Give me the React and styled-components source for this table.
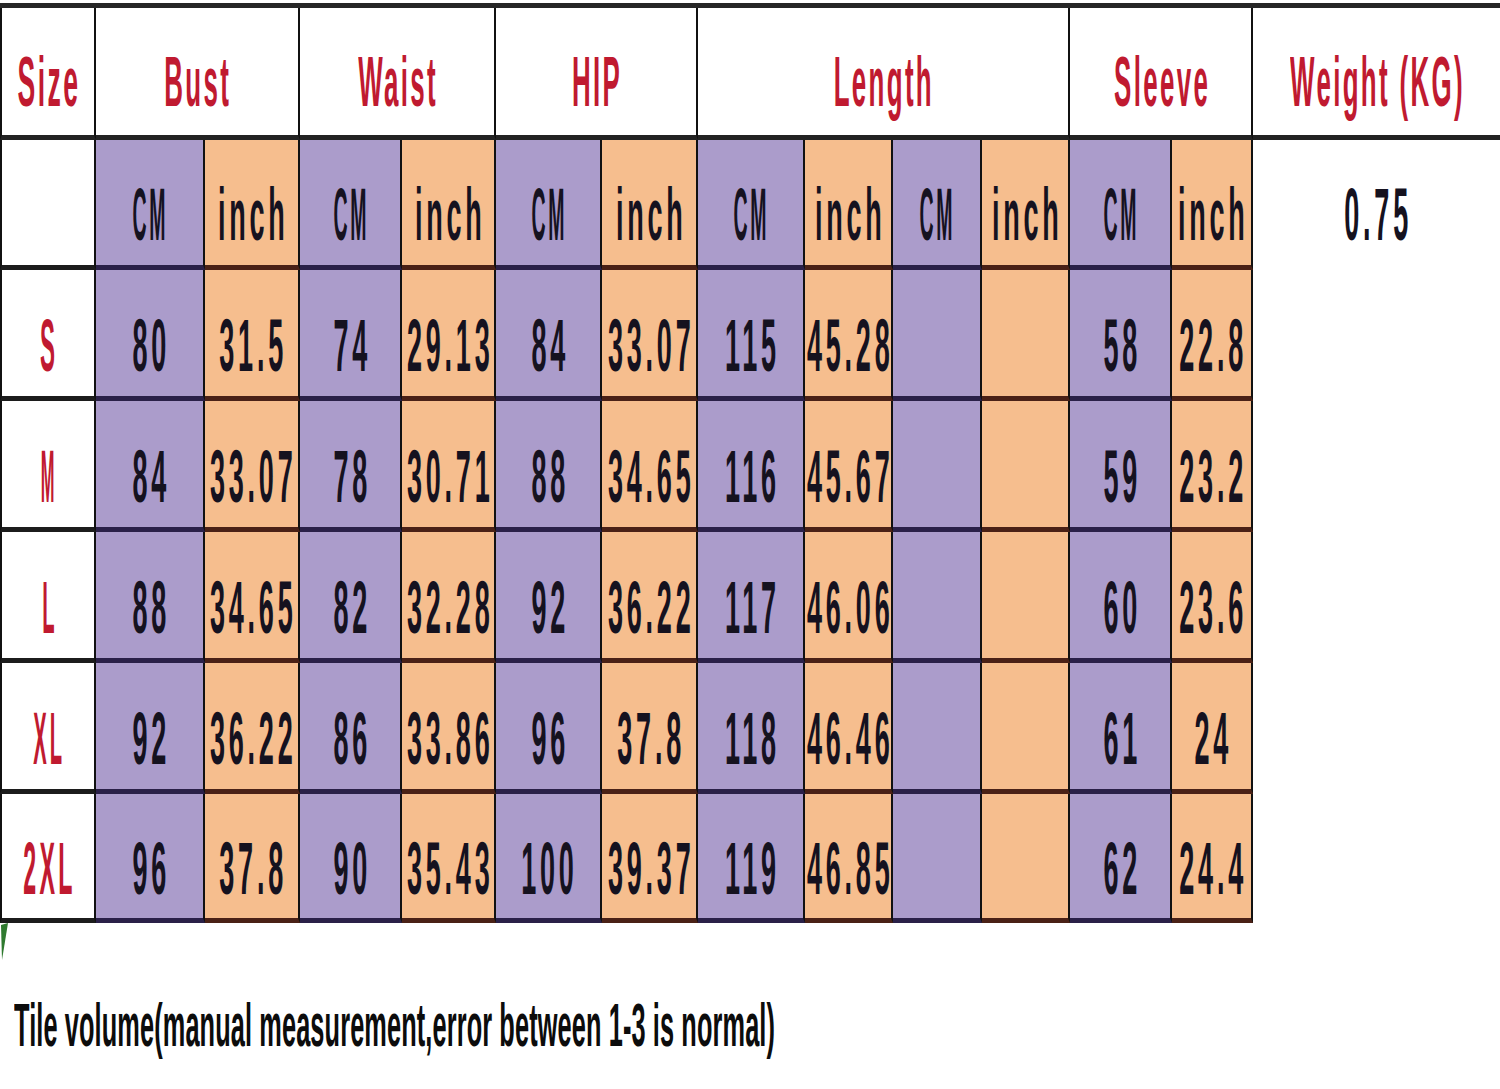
import React from "react";
import styled, { createGlobalStyle } from "styled-components";

const Global = createGlobalStyle`
  html, body { margin: 0; padding: 0; background: #ffffff; overflow: hidden; }
  body { font-family: "Liberation Sans", Arial, sans-serif; }
`;

const Page = styled.div`
  position: relative;
  width: 1500px;
  height: 1089px;
  overflow: hidden;
  background: #fff;
`;

const Grid = styled.div`
  display: grid;
  margin: 3px 0 0 0;
  grid-template-columns: 96px 109px 95px 102px 94px 106px 96px 107px 88px 89px 88px 102px 81px 247px;
  grid-template-rows: 132px 130px 131px 131px 131px 131px 129px;
  border-top: 5px solid #262626;
`;

const LINE = {
  head: "#222222",
  size: "#1c1c1c",
  cm: "#2a2048",
  inch: "#4a2116",
};

const FILL = {
  head: "#ffffff",
  size: "#ffffff",
  cm: "#ab9ccb",
  inch: "#f6be8e",
};

const Cell = styled.div`
  box-sizing: border-box;
  display: flex;
  align-items: center;
  justify-content: center;
  padding-top: ${(p) => (p.$kind === "head" ? 21 : 24)}px;
  background: ${(p) => FILL[p.$kind]};
  border-bottom: 5px solid ${(p) => LINE[p.$kind]};
  border-right: 2px solid #111;
  border-left: ${(p) => (p.$first ? "2px solid #111" : "none")};
  grid-column: span ${(p) => p.$span || 1};
  min-width: 0;
`;

const WeightHead = styled(Cell)`
  border-right: none;
`;

const WeightBody = styled.div`
  grid-column: 14;
  grid-row: 2 / span 6;
  display: flex;
  justify-content: center;
  align-items: flex-start;
`;

const WeightValue = styled.div`
  height: 125px;
  box-sizing: border-box;
  padding-top: 24px;
  display: flex;
  align-items: center;
  justify-content: center;
`;

const Label = styled.span`
  display: inline-block;
  white-space: nowrap;
  font-family: "Liberation Sans", Arial, sans-serif;
  font-weight: 700;
  font-size: ${(p) => p.$size || 75}px;
  line-height: 1;
  color: ${(p) => (p.$red ? "#c01a30" : "#15121f")};
  transform: scaleX(${(p) => p.$sx || 0.36});
  transform-origin: center;
  letter-spacing: ${(p) => p.$ls ?? 0.14}em;
  padding-left: ${(p) => p.$ls ?? 0.14}em;
`;

const Footer = styled.div`
  margin-top: 72px;
  padding-left: 14px;
  white-space: nowrap;
`;

const FooterText = styled.span`
  display: inline-block;
  font-family: "Liberation Sans", Arial, sans-serif;
  font-weight: 700;
  font-size: 61px;
  line-height: 1;
  color: #0c0c0c;
  transform: scaleX(0.415);
  transform-origin: left center;
  letter-spacing: 0.005em;
`;

const Mark = styled.svg`
  position: absolute;
  left: 0;
  top: 922px;
`;

const headers = [
  { t: "Bust", span: 2 },
  { t: "Waist", span: 2 },
  { t: "HIP", span: 2 },
  { t: "Length", span: 4 },
  { t: "Sleeve", span: 2 },
];

const rows = [
  { s: "S", sx: 0.3, v: ["80", "31.5", "74", "29.13", "84", "33.07", "115", "45.28", "", "", "58", "22.8"] },
  { s: "M", sx: 0.22, v: ["84", "33.07", "78", "30.71", "88", "34.65", "116", "45.67", "", "", "59", "23.2"] },
  { s: "L", sx: 0.27, v: ["88", "34.65", "82", "32.28", "92", "36.22", "117", "46.06", "", "", "60", "23.6"] },
  { s: "XL", sx: 0.27, v: ["92", "36.22", "86", "33.86", "96", "37.8", "118", "46.46", "", "", "61", "24"] },
  { s: "2XL", sx: 0.31, v: ["96", "37.8", "90", "35.43", "100", "39.37", "119", "46.85", "", "", "62", "24.4"] },
];

export default function App() {
  return (
    <Page>
      <Global />
      <Grid>
        <Cell $kind="head" $first>
          <Label $red $size={70} $sx={0.38} $ls={0.09}>Size</Label>
        </Cell>
        {headers.map((h) => (
          <Cell key={h.t} $kind="head" $span={h.span}>
            <Label $red $size={70} $sx={0.37} $ls={0.09}>{h.t}</Label>
          </Cell>
        ))}
        <WeightHead $kind="head">
          <Label $red $size={70} $sx={0.37} $ls={0.09}>Weight (KG)</Label>
        </WeightHead>

        <Cell $kind="size" $first />
        {Array.from({ length: 12 }).map((_, i) => {
          const cm = i % 2 === 0;
          return (
            <Cell key={"u" + i} $kind={cm ? "cm" : "inch"}>
              <Label $sx={cm ? 0.26 : 0.36}>{cm ? "CM" : "inch"}</Label>
            </Cell>
          );
        })}
        <WeightBody>
          <WeightValue>
            <Label>0.75</Label>
          </WeightValue>
        </WeightBody>

        {rows.map((r) => (
          <React.Fragment key={r.s}>
            <Cell $kind="size" $first>
              <Label $red $sx={r.sx}>{r.s}</Label>
            </Cell>
            {r.v.map((t, i) => (
              <Cell key={r.s + i} $kind={i % 2 === 0 ? "cm" : "inch"}>
                {t && <Label>{t}</Label>}
              </Cell>
            ))}
          </React.Fragment>
        ))}
      </Grid>
      <Footer>
        <FooterText>Tile volume(manual measurement,error between 1-3 is normal)</FooterText>
      </Footer>
      <Mark width="12" height="50" viewBox="0 0 12 50">
        <path d="M1 3 L8 1 L2 38 Z" fill="#2f7a2f" />
      </Mark>
    </Page>
  );
}
